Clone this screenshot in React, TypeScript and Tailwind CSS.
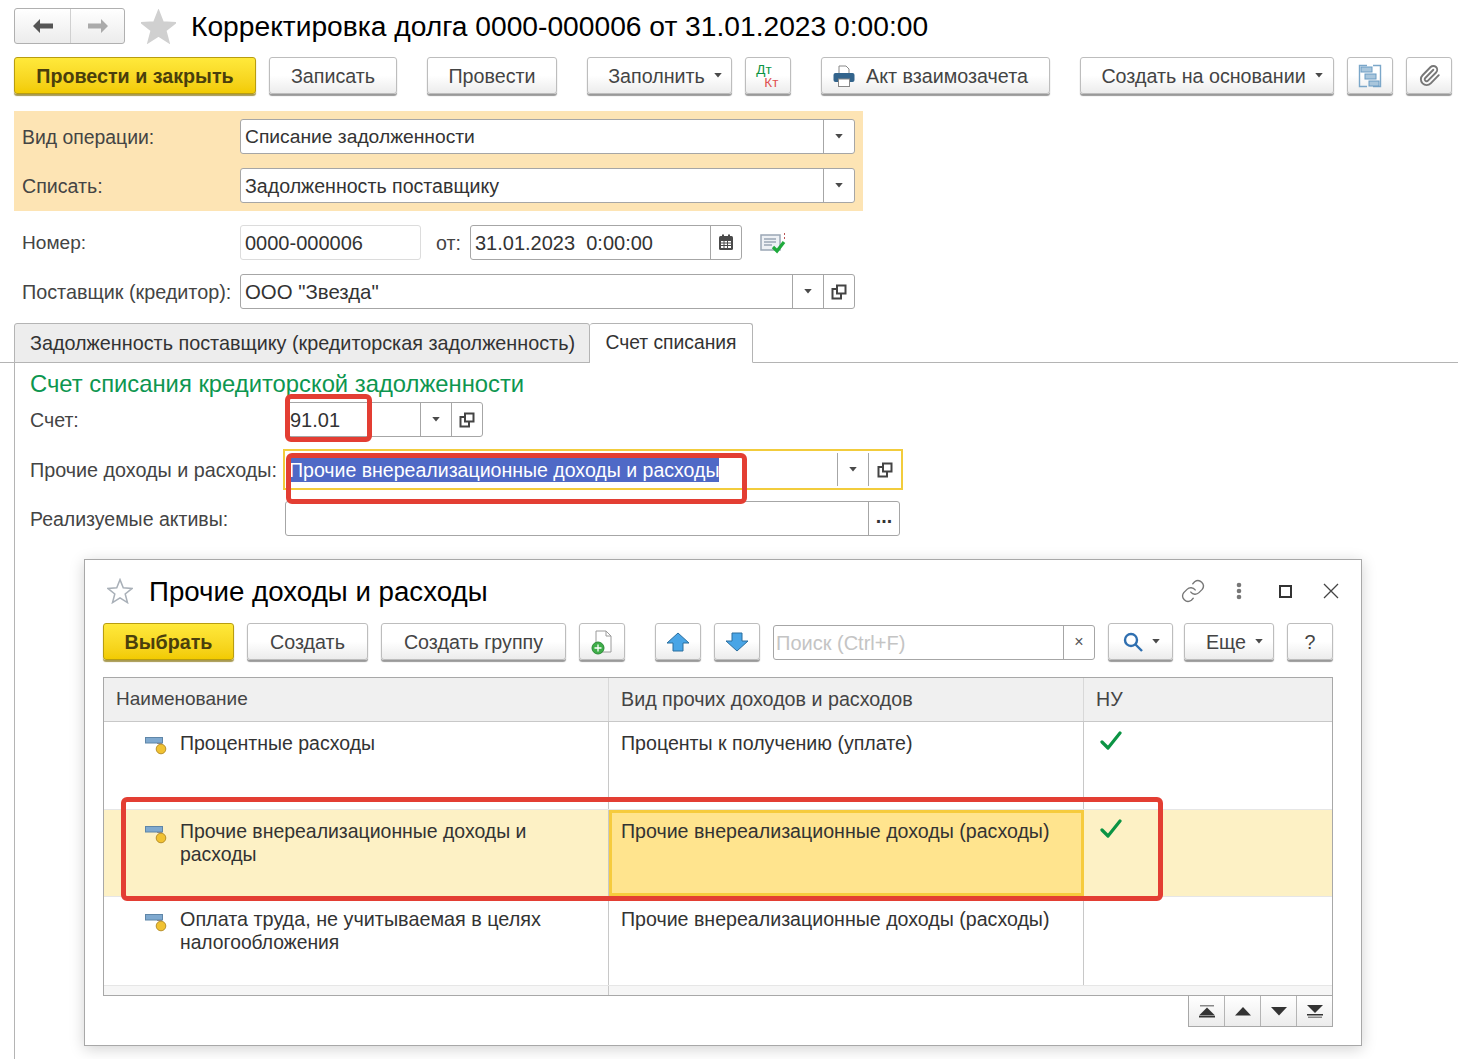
import type { ReactNode } from "react"
import { Paperclip } from "lucide-react"

const Caret = ({ className = "" }: { className?: string }) => (
  <svg width="8" height="5" viewBox="0 0 9 6" className={className}>
    <path d="M0 0h9L4.500 5.500z" fill="#4a4a4a" />
  </svg>
)

const OpenIcon = () => (
  <svg width="16" height="16" viewBox="0 0 16 16" fill="none" stroke="#444" strokeWidth="2">
    <rect x="6" y="1.500" width="8.500" height="8" />
    <path d="M6 5H1.500v9.500H10V10" />
  </svg>
)

const Star = ({ size, filled }: { size: number; filled?: boolean }) => (
  <svg width={size} height={size} viewBox="0 0 24 24">
    <path
      d="M12 1.500l3 7.600 8.200.5-6.400 5.100 2.100 8-6.900-4.400-6.900 4.400 2.100-8L.8 9.600 9 9.100z"
      fill={filled ? "#d0d0d0" : "#fff"}
      stroke={filled ? "#d0d0d0" : "#a9b0b8"}
      strokeWidth="1.400"
    />
  </svg>
)

const Btn = ({ w, children, yellow, ml = 0, bold, className = "" }: { w: number; children: ReactNode; yellow?: boolean; ml?: number; bold?: boolean; className?: string }) => (
  <div
    className={`flex h-[37px] shrink-0 items-center justify-center rounded-[3px] border text-[19.7px] ${
      yellow
        ? "border-[#b89d10] bg-gradient-to-b from-[#ffe93a] to-[#f2cb00] text-[#4a3f0c] shadow-[0_2px_1px_#a89a50]"
        : "border-[#bdbdbd] bg-gradient-to-b from-white via-white to-[#ececec] text-[#444] shadow-[0_2px_1px_#999]"
    } ${bold ? "font-bold" : ""} ${className}`}
    style={{ width: w, marginLeft: ml }}
  >
    {children}
  </div>
)

const Field = ({ w, children, caret, open, dots, h = 35 }: { w: number; children?: ReactNode; caret?: boolean; open?: boolean; dots?: boolean; h?: number }) => (
  <div className="flex shrink-0 items-stretch rounded-[3px] border border-[#a6a6a6] bg-white" style={{ width: w, height: h }}>
    <div className="flex min-w-0 flex-1 items-center pl-1 text-[#333]">{children}</div>
    {caret && (
      <div className="flex w-[31px] items-center justify-center border-l border-[#a6a6a6]">
        <Caret />
      </div>
    )}
    {open && (
      <div className="flex w-[31px] items-center justify-center border-l border-[#a6a6a6]">
        <OpenIcon />
      </div>
    )}
    {dots && <div className="flex w-[31px] items-center justify-center border-l border-[#a6a6a6] pb-1 font-bold leading-none text-[#333]">...</div>}
  </div>
)

const RowIcon = () => (
  <svg width="22" height="18" viewBox="0 0 22 18" className="mt-[6px] shrink-0">
    <rect x="0.500" y="0.500" width="17" height="5.500" fill="#7fa9cf" stroke="#5f86a8" />
    <path d="M12 6.500h5" stroke="#888" />
    <circle cx="16" cy="12" r="4.800" fill="#f1c232" stroke="#b8902a" />
  </svg>
)

const Check = () => (
  <svg width="22" height="20" viewBox="0 0 22 20" fill="none">
    <path d="M2 11l6 6L20 2" stroke="#0b9444" strokeWidth="3.200" strokeLinecap="round" strokeLinejoin="round" />
  </svg>
)

const BlueArrow = ({ down }: { down?: boolean }) => (
  <svg width="24" height="20" viewBox="0 0 24 20" className={down ? "rotate-180" : ""}>
    <path d="M12 1L23 11h-6v8H7v-8H1z" fill="#49a5e6" stroke="#2b6f9f" strokeWidth="1" />
  </svg>
)

function App() {
  return (
    <div className="relative h-[1059px] w-[1458px] overflow-hidden bg-white font-['Liberation_Sans',sans-serif] text-[19.6px] leading-[24px] text-[#444]">
      {/* шапка */}
      <div className="flex h-[57px] items-start pl-[14px] pt-2">
        <div className="flex h-9 w-[111px] rounded-[3px] border border-[#b0b0b0] bg-gradient-to-b from-white to-[#ececec]">
          <div className="flex w-[56px] items-center justify-center border-r border-[#d0d0d0]">
            <svg width="22" height="16" viewBox="0 0 22 16">
              <path d="M1 8l7-7v4.500h13v5H8V15z" fill="#555" />
            </svg>
          </div>
          <div className="flex flex-1 items-center justify-center">
            <svg width="22" height="16" viewBox="0 0 22 16">
              <path d="M21 8l-7-7v4.500H1v5h13V15z" fill="#aaa" />
            </svg>
          </div>
        </div>
        <div className="ml-[16px] mt-[1px]">
          <Star size={35} filled />
        </div>
        <div className="ml-[15px] whitespace-nowrap text-[28.2px] leading-9 text-black">Корректировка долга 0000-000006 от 31.01.2023 0:00:00</div>
      </div>

      {/* панель команд */}
      <div className="flex pl-[14px]">
        <Btn w={242} yellow bold className="text-[19.5px]">Провести и закрыть</Btn>
        <Btn w={128} ml={13}>Записать</Btn>
        <Btn w={130} ml={30}>Провести</Btn>
        <Btn w={145} ml={30} className="pl-[11px] text-[19.2px]">
          Заполнить <Caret className="ml-[9px]" />
        </Btn>
        <Btn w={46} ml={13}>
          <div className="flex flex-col text-[13.5px] leading-[13px]">
            <div className="pr-2 text-[#0b9444]">Дт</div>
            <div className="pl-2 text-[#e05050]">Кт</div>
          </div>
        </Btn>
        <Btn w={229} ml={30} className="pr-[10px]">
          <svg width="22" height="22" viewBox="0 0 22 22" className="mr-[11px]">
            <path d="M6 1h7l3 3v6H6z" fill="#fff" stroke="#888" />
            <rect x="0.500" y="8" width="21" height="9" rx="2" fill="#33648c" />
            <rect x="5.500" y="14" width="11" height="7.500" fill="#fff" stroke="#888" />
          </svg>
          Акт взаимозачета
        </Btn>
        <Btn w={254} ml={30} className="pl-[10px]">
          Создать на основании <Caret className="ml-[9px]" />
        </Btn>
        <Btn w={46} ml={13}>
          <svg width="24" height="24" viewBox="0 0 24 24" fill="none">
            <path d="M15 1.500h7.500v21H15M9 22.500H1.500v-21H9" stroke="#7ba7c9" strokeWidth="1.400" />
            <rect x="3" y="3" width="11" height="5" fill="#a9c6dc" stroke="#6a9cc4" />
            <rect x="7" y="10" width="11" height="5" fill="#a9c6dc" stroke="#6a9cc4" />
            <rect x="11" y="17" width="10" height="5" fill="#a9c6dc" stroke="#6a9cc4" />
          </svg>
        </Btn>
        <Btn w={46} ml={13}>
          <Paperclip size={23} color="#777" />
        </Btn>
      </div>

      {/* шапка документа */}
      <div className="ml-[14px] mt-[17px] flex h-[100px] w-[849px] flex-col gap-[14px] bg-[#fde4b4] pt-2">
        <div className="flex items-center">
          <div className="w-[226px] pl-2 text-[19.4px]">Вид операции:</div>
          <Field w={615} caret><span className="text-[19.25px]">Списание задолженности</span></Field>
        </div>
        <div className="flex items-center">
          <div className="w-[226px] pl-2">Списать:</div>
          <Field w={615} caret>Задолженность поставщику</Field>
        </div>
      </div>

      <div className="ml-[22px] mt-[14px] flex items-center">
        <div className="w-[218px] text-[19.1px]">Номер:</div>
        <div className="flex h-[35px] w-[181px] items-center rounded-[3px] border border-[#dcdcdc] pl-1 text-[20px] text-[#333]">0000-000006</div>
        <div className="ml-[15px] w-[34px]">от:</div>
        <div className="flex h-[35px] w-[272px] items-stretch rounded-[3px] border border-[#a6a6a6]">
          <div className="flex flex-1 items-center whitespace-pre pl-1 text-[20px] text-[#333]">31.01.2023  0:00:00</div>
          <div className="flex w-[31px] items-center justify-center border-l border-[#a6a6a6]">
            <svg width="16" height="17" viewBox="0 0 16 17">
              <rect x="1" y="2" width="14" height="14" rx="1.500" fill="#4a4a4a" />
              <rect x="4" y="0.500" width="2" height="3" fill="#4a4a4a" />
              <rect x="10" y="0.500" width="2" height="3" fill="#4a4a4a" />
              <path d="M3 7h10v7H3z" fill="#fff" />
              <path d="M3 9h10M3 11.500h10M6 7v7M9.500 7v7" stroke="#4a4a4a" />
            </svg>
          </div>
        </div>
        <svg width="26" height="24" viewBox="0 0 26 24" className="ml-[18px]">
          <rect x="1" y="4" width="19" height="15" fill="#eef1f5" stroke="#9aa7b5" strokeWidth="1.500" />
          <path d="M4 8h12M4 11h12M4 14h8" stroke="#9aa7b5" strokeWidth="1.300" />
          <path d="M13 16l4 4 7-9" fill="none" stroke="#1faa3c" strokeWidth="3.200" />
          <path d="M24.500 2v2M24.500 6v2" stroke="#b55" />
        </svg>
      </div>

      <div className="ml-[22px] mt-[14px] flex items-center">
        <div className="w-[218px] whitespace-nowrap text-[19.8px]">Поставщик (кредитор):</div>
        <Field w={615} caret open><span className="text-[20.4px]">ООО "Звезда"</span></Field>
      </div>

      {/* вкладки */}
      <div className="mt-[14px] flex h-10 border-b border-[#b4b4b4] pl-[14px]">
        <div className="flex h-10 w-[576px] items-center whitespace-nowrap rounded-t-[3px] border border-[#b4b4b4] bg-[#ededed] pl-[15px] text-[19.8px] text-[#333]">
          Задолженность поставщику (кредиторская задолженность)
        </div>
        <div className="flex h-10 w-[163px] items-center justify-center rounded-t-[3px] border border-l-0 border-[#b4b4b4] border-b-white bg-white text-[19.3px] text-[#333]">
          Счет списания
        </div>
      </div>

      {/* содержимое вкладки */}
      <div className="relative ml-[14px] h-[697px] border-l border-[#b4b4b4] pl-[15px]">
        <div className="pt-[7px] text-[23.8px] leading-[27px] text-[#0d9650]">Счет списания кредиторской задолженности</div>
        <div className="mt-[5px] flex items-center">
          <div className="w-[255px]">Счет:</div>
          <Field w={198} caret open><span className="text-[20px]">91.01</span></Field>
        </div>
        <div className="mt-3 flex items-center">
          <div className="w-[253px] whitespace-nowrap text-[19.75px]">Прочие доходы и расходы:</div>
          <div className="flex h-[41px] w-[620px] items-stretch border-2 border-[#f2cc3c] bg-white">
            <div className="flex flex-1 items-start pl-1 pt-[7px]">
              <span className="bg-[#4f69c6] text-[19.55px] text-white">Прочие внереализационные доходы и расходы</span>
            </div>
            <div className="my-[2px] flex w-[31px] items-center justify-center border-l border-[#a6a6a6]">
              <Caret />
            </div>
            <div className="my-[2px] flex w-[33px] items-center justify-center border-l border-[#a6a6a6]">
              <OpenIcon />
            </div>
          </div>
        </div>
        <div className="mt-[11px] flex items-center">
          <div className="w-[255px] text-[19.5px]">Реализуемые активы:</div>
          <Field w={615} dots></Field>
        </div>

        {/* красные рамки */}
        <div className="absolute left-[270px] top-[31px] h-[48px] w-[87px] rounded-[6px] border-[5px] border-[#e33e33]" />
        <div className="absolute left-[271px] top-[90px] h-[51px] w-[461px] rounded-[6px] border-[5px] border-[#e33e33]" />

        {/* окно выбора */}
        <div className="absolute left-[69px] top-[196px] h-[487px] w-[1278px] border border-[#a8a8a8] bg-white pl-[18px] pt-[13px] shadow-[0_3px_14px_rgba(0,0,0,0.18)]">
          <div className="flex h-[36px] items-center pl-[4px]">
            <Star size={26} />
            <div className="ml-4 flex-1 pt-[1px] text-[27.7px] leading-9 text-black">Прочие доходы и расходы</div>
            <div className="flex items-center pr-[21px]">
              <svg width="26" height="26" viewBox="0 0 24 24" fill="none" stroke="#777" strokeWidth="1.300" strokeLinecap="round">
                <path d="M10 13a5 5 0 0 0 7.500.5l3-3a5 5 0 0 0-7-7l-1.700 1.700" />
                <path d="M14 11a5 5 0 0 0-7.500-.5l-3 3a5 5 0 0 0 7 7l1.700-1.700" />
              </svg>
              <svg width="6" height="18" viewBox="0 0 6 18" className="ml-[30px]">
                <circle cx="3" cy="3" r="2.300" fill="#777" />
                <circle cx="3" cy="9" r="2.300" fill="#777" />
                <circle cx="3" cy="15" r="2.300" fill="#777" />
              </svg>
              <div className="ml-[37px] h-[13px] w-[13px] border-2 border-[#333]" />
              <svg width="18" height="18" viewBox="0 0 18 18" className="ml-[30px]" stroke="#444" strokeWidth="1.300">
                <path d="M2 2l14 14M16 2L2 16" />
              </svg>
            </div>
          </div>

          <div className="mt-[14px] flex items-start">
            <Btn w={131} yellow bold className="text-[19.6px]">Выбрать</Btn>
            <Btn w={121} ml={13}>Создать</Btn>
            <Btn w={185} ml={13}>Создать группу</Btn>
            <Btn w={46} ml={13}>
              <svg width="24" height="26" viewBox="0 0 24 26">
                <path d="M6 2h10l5 5v16H6z" fill="#fff" stroke="#9a9a9a" />
                <path d="M16 2v5h5" fill="none" stroke="#9a9a9a" />
                <circle cx="8" cy="19" r="6" fill="#3fae49" stroke="#2b8a36" />
                <path d="M8 15.500v7M4.500 19h7" stroke="#fff" strokeWidth="1.300" />
              </svg>
            </Btn>
            <Btn w={46} ml={30}><BlueArrow /></Btn>
            <Btn w={46} ml={13}><BlueArrow down /></Btn>
            <div className="ml-[13px] mt-[2px] flex h-[35px] w-[322px] items-stretch rounded-[3px] border border-[#a6a6a6]">
              <div className="flex flex-1 items-center pl-[2px] text-[20px] text-[#c4c4c4]">Поиск (Ctrl+F)</div>
              <div className="flex w-[31px] items-center justify-center border-l border-[#a6a6a6] pb-[2px] text-[16px] text-[#555]">×</div>
            </div>
            <Btn w={65} ml={13}>
              <svg width="22" height="22" viewBox="0 0 22 22" fill="none" stroke="#2f6fb0" strokeWidth="2.400">
                <circle cx="9" cy="9" r="6" />
                <path d="M13.500 13.500L20 20" />
              </svg>
              <Caret className="ml-2" />
            </Btn>
            <Btn w={90} ml={11} className="pl-[11px]">
              Еще <Caret className="ml-[9px]" />
            </Btn>
            <Btn w={46} ml={13}>?</Btn>
          </div>

          {/* таблица */}
          <div className="relative mt-[17px] w-[1230px] border border-[#a8a8a8] text-[#333]">
            <div className="grid h-[44px] grid-cols-[505px_475px_1fr] items-center border-b border-[#c8c8c8] bg-[#f0f0f0] text-[#444]">
              <div className="flex h-full items-center border-r border-[#d8d8d8] pb-[2px] pl-3 text-[19px]">Наименование</div>
              <div className="flex h-full items-center border-r border-[#d8d8d8] pb-[2px] pl-3 text-[19.7px]">Вид прочих доходов и расходов</div>
              <div className="pb-[2px] pl-3">НУ</div>
            </div>
            <div className="grid h-[88px] grid-cols-[505px_475px_1fr] border-b border-[#e6e6e6]">
              <div className="flex gap-[13px] border-r border-[#c8c8c8] pl-[41px] pt-[9px]">
                <RowIcon />
                <div className="w-[340px] text-[19.5px]">Процентные расходы</div>
              </div>
              <div className="border-r border-[#c8c8c8] pl-3 pt-[9px]">Проценты к получению (уплате)</div>
              <div className="pl-4 pt-[9px]"><Check /></div>
            </div>
            <div className="grid h-[87px] grid-cols-[505px_475px_1fr] border-b border-[#e6e6e6] bg-[#fdf1c5]">
              <div className="flex gap-[13px] border-r border-[#c8c8c8] pl-[41px] pt-[10px]">
                <RowIcon />
                <div className="w-[380px] text-[19.45px] leading-[23px]">Прочие внереализационные доходы и расходы</div>
              </div>
              <div className="border-[3px] border-[#f6cb3d] bg-[#ffe48e] pl-[9px] pt-[6px]">Прочие внереализационные доходы (расходы)</div>
              <div className="pl-4 pt-[9px]"><Check /></div>
            </div>
            <div className="grid h-[89px] grid-cols-[505px_475px_1fr] border-b border-[#e6e6e6]">
              <div className="flex gap-[13px] border-r border-[#c8c8c8] pl-[41px] pt-[11px]">
                <RowIcon />
                <div className="w-[380px] leading-[23px]">
                  <div className="text-[19.8px]">Оплата труда, не учитываемая в целях</div>
                  <div className="text-[19.3px]">налогообложения</div>
                </div>
              </div>
              <div className="border-r border-[#c8c8c8] pl-3 pt-[10px]">Прочие внереализационные доходы (расходы)</div>
              <div />
            </div>
            <div className="grid h-[9px] grid-cols-[505px_1fr] bg-[#f6f6f6]">
              <div className="border-r border-[#c8c8c8]" />
              <div />
            </div>
            <div className="absolute left-[17px] top-[119px] h-[104px] w-[1042px] rounded-[6px] border-[5px] border-[#e33e33]" />
          </div>

          {/* листание */}
          <div className="ml-[1085px] flex h-[31px] w-[145px] border border-t-0 border-[#a8a8a8] bg-gradient-to-b from-white to-[#ececec]">
            <div className="flex flex-1 items-center justify-center border-r border-[#b4b4b4]">
              <svg width="16" height="13" viewBox="0 0 16 13"><path d="M1 0h14v1.500H1z" fill="#888" /><path d="M8 2.500l8 8H0z" fill="#333" /><path d="M0 11h16v1.500H0z" fill="#333" /></svg>
            </div>
            <div className="flex flex-1 items-center justify-center border-r border-[#b4b4b4]">
              <svg width="16" height="9" viewBox="0 0 16 9"><path d="M8 0l8 8.500H0z" fill="#333" /></svg>
            </div>
            <div className="flex flex-1 items-center justify-center border-r border-[#b4b4b4]">
              <svg width="16" height="9" viewBox="0 0 16 9"><path d="M0 0h16L8 8.500z" fill="#333" /></svg>
            </div>
            <div className="flex flex-1 items-center justify-center">
              <svg width="16" height="13" viewBox="0 0 16 13"><path d="M0 0h16L8 8z" fill="#333" /><path d="M0 9h16v1.500H0z" fill="#333" /><path d="M1 11.500h14V13H1z" fill="#888" /></svg>
            </div>
          </div>
        </div>
      </div>
    </div>
  )
}

export default App
